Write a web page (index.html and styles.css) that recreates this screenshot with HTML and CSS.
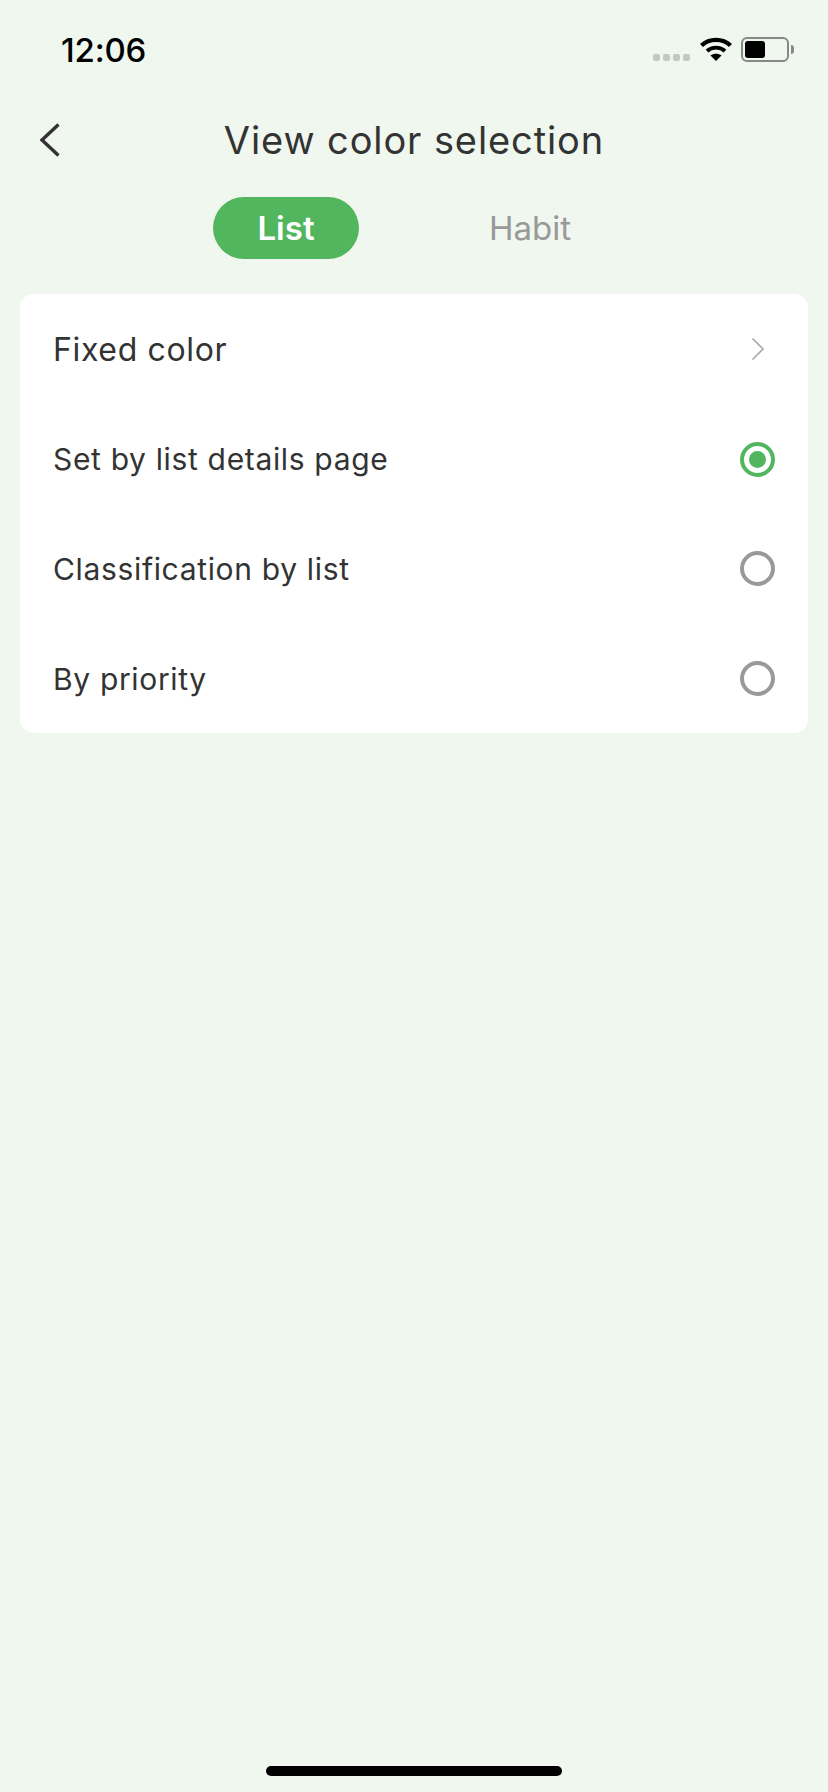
FILE: index.html
```html
<!DOCTYPE html>
<html lang="en">
<head>
<meta charset="utf-8">
<title>View color selection</title>
<link rel="stylesheet" href="styles.css">
</head>
<body>
<div class="screen">
  <div class="status">
    <span class="time">12:06</span>
    <div class="status-icons">
      <div class="signal"><i></i><i></i><i></i><i></i></div>
      <svg class="wifi" width="32" height="24" viewBox="0 0 32 24">
        <path d="M1.500 8.500C9.500 1 22.500 1 30.500 8.500" fill="none" stroke="#000" stroke-width="4.400"/>
        <path d="M7 14C12 9.500 20 9.500 25 14" fill="none" stroke="#000" stroke-width="3.800"/>
        <path d="M16 24L10.500 18.500C13.500 16 18.500 16 21.500 18.500Z" fill="#000"/>
      </svg>
      <div class="battery"><div class="battery-level"></div></div>
      <div class="battery-nub"></div>
    </div>
  </div>
  <div class="nav">
    <svg class="back" width="20" height="34" viewBox="0 0 20 34"><path d="M18.500 1.500L2 17L18.500 32.500" fill="none" stroke="#333" stroke-width="3.400"/></svg>
    <h1 class="title">View color selection</h1>
  </div>
  <div class="tabs">
    <span class="tab tab-active">List</span>
    <span class="tab">Habit</span>
  </div>
  <div class="card">
    <div class="row row-lead"><span>Fixed color</span>
      <svg class="chev" width="14" height="24" viewBox="0 0 14 24"><path d="M1.500 1.500L12 12L1.500 22.500" fill="none" stroke="#aaa" stroke-width="1.700"/></svg>
    </div>
    <div class="row"><span>Set by list details page</span><span class="radio radio-on"></span></div>
    <div class="row"><span>Classification by list</span><span class="radio"></span></div>
    <div class="row"><span>By priority</span><span class="radio"></span></div>
  </div>
  <div class="home"></div>
</div>
</body>
</html>
```
FILE: styles.css
```css
* { box-sizing: border-box; }
html, body { margin: 0; padding: 0; }
body { background: #eff7ee; font-family: Inter, "Liberation Sans", sans-serif; }
.screen { width: 828px; height: 1792px; display: flex; flex-direction: column; overflow: hidden; }
.status { height: 100px; padding: 30px 34px 0 61px; display: flex; justify-content: space-between; align-items: flex-start; }
.time { font-size: 33px; font-weight: 500; letter-spacing: -0.200px; line-height: 40px; color: #000; }
.status-icons { display: flex; align-items: flex-start; padding-top: 7px; }
.signal { display: flex; gap: 3px; margin-top: 17px; margin-right: 10px; }
.signal i { width: 7px; height: 7px; border-radius: 2px; background: #c2c9c2; }
.wifi { margin-right: 9px; }
.battery { width: 48px; height: 25px; border: 2.500px solid #888; border-radius: 6px; padding: 1.500px; }
.battery-level { width: 20px; height: 17px; background: #000; border-radius: 3px; }
.battery-nub { width: 3px; height: 9px; margin: 8px 0 0 2px; background: #888; border-radius: 0 3px 3px 0; }
.nav { height: 80px; display: flex; align-items: center; justify-content: center; position: relative; }
.back { position: absolute; left: 40px; top: 23px; }
.title { margin: 0; font-size: 38px; font-weight: 400; letter-spacing: 0.900px; color: #333; }
.tabs { margin-top: 17px; height: 62px; display: flex; justify-content: center; gap: 98px; padding-right: 12px; }
.tab { width: 146px; height: 62px; border-radius: 31px; display: flex; align-items: center; justify-content: center; font-size: 33px; color: #999; }
.tab-active { background: #52b65e; color: #fff; font-weight: 600; }
.card { margin: 35px 20px 0; height: 439px; background: #fff; border-radius: 14px; padding: 0 33px; display: grid; grid-template-rows: repeat(4, 1fr); }
.row { min-height: 0; display: flex; align-items: center; justify-content: space-between; font-size: 30px; letter-spacing: 0.660px; line-height: 38px; color: #333; padding-top: 1px; }
.row-lead { font-size: 32px; letter-spacing: 0.650px; padding-top: 3px; }
.chev { margin-right: 10px; margin-top: -2px; }
.radio { width: 35px; height: 35px; border-radius: 50%; border: 4px solid #999; display: flex; align-items: center; justify-content: center; }
.radio-on { border-color: #52b65e; }
.radio-on::after { content: ""; width: 17px; height: 17px; border-radius: 50%; background: #52b65e; }
.home { margin: auto auto 16px; width: 296px; height: 10px; border-radius: 5px; background: #000; }
```
